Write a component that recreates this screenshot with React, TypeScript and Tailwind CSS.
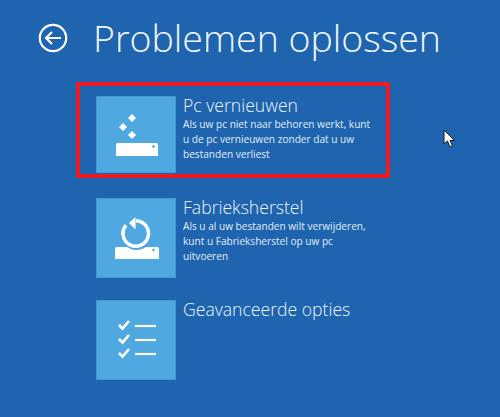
import type { ReactNode } from "react";

const font = { fontFamily: '"Open Sans", "Noto Sans", sans-serif' };

function RefreshIcon() {
  return (
    <svg width="80" height="77" viewBox="0 0 80 77">
      <path d="M36 18l4 4-4 4-4-4z" fill="#fff" />
      <path d="M27 27l4 4-4 4-4-4z" fill="#fff" />
      <path d="M36 35l4 4-4 4-4-4z" fill="#fff" />
      <path d="M20 49q0-2 2-2h38q2 0 2 2v11H20z" fill="#fff" />
      <path d="M56 50.500h3M57.500 49v3" stroke="#4fa8e0" strokeWidth="1" fill="none" />
    </svg>
  );
}

function ResetIcon() {
  return (
    <svg width="80" height="80" viewBox="0 0 80 80">
      <path d="M21 49h40q2 0 2 2v10H19V51q0-2 2-2z" fill="#fff" />
      <circle cx="40.500" cy="35.500" r="16.500" fill="#4fa8e0" />
      <path d="M40 22.750a12.750 12.750 0 1 1-10 4.500" fill="none" stroke="#fff" strokeWidth="3.500" />
      <path d="M33 25l6.500-6v12.500z" fill="#fff" />
      <path d="M56 52h3M57.500 50.500v3" stroke="#4fa8e0" strokeWidth="1" fill="none" />
    </svg>
  );
}

function OptionsIcon() {
  const rows = [26, 40, 54];
  return (
    <svg width="80" height="80" viewBox="0 0 80 80">
      {rows.map((y) => (
        <g key={y}>
          <path d={`M23 ${y - 1}l3.500 3.500 6.500-7.500`} fill="none" stroke="#fff" strokeWidth="2.600" />
          <path d={`M39 ${y}h21`} fill="none" stroke="#fff" strokeWidth="2.200" />
        </g>
      ))}
    </svg>
  );
}

function Option({ title, text, tileClass, children }: { title: string; text: string[]; tileClass: string; children: ReactNode }) {
  return (
    <div className="flex">
      <div className={`w-[80px] shrink-0 bg-[#4fa8e0] shadow-[inset_0_0_0_1px_#4598d6] ${tileClass}`}>{children}</div>
      <div className="ml-[7px] -mt-[2px]">
        <h2 className="text-[17.6px] leading-[22px] font-light text-[#eef5fb]">{title}</h2>
        <div className="mt-[1px] text-[10.1px] leading-[15px] text-[#e3eef8]">
          {text.map((line) => (
            <p key={line} className="whitespace-nowrap">{line}</p>
          ))}
        </div>
      </div>
    </div>
  );
}

export default function App() {
  return (
    <div className="relative h-[417px] w-[500px] overflow-hidden bg-[#1e64ae]" style={font}>
      <header className="flex h-[96px] items-start pl-[38px]">
        <svg className="mt-[23px]" width="30" height="30" viewBox="0 0 30 30" fill="none" stroke="#fff">
          <circle cx="15" cy="15" r="13.200" strokeWidth="2.200" />
          <path d="M23 15H8M14 9l-6 6 6 6" strokeWidth="2.200" />
        </svg>
        <h1 className="ml-[25px] mt-[13px] whitespace-nowrap text-[37.5px] leading-[50px] font-light text-[#f2f7fc]">Problemen oplossen</h1>
      </header>

      <main className="flex flex-col pl-[96px]">
        <Option
          title="Pc vernieuwen"
          text={["Als uw pc niet naar behoren werkt, kunt", "u de pc vernieuwen zonder dat u uw", "bestanden verliest"]}
          tileClass="h-[77px]"
        >
          <RefreshIcon />
        </Option>
        <div className="mt-[25px]">
          <Option
            title="Fabrieksherstel"
            text={["Als u al uw bestanden wilt verwijderen,", "kunt u Fabrieksherstel op uw pc", "uitvoeren"]}
            tileClass="h-[80px]"
          >
            <ResetIcon />
          </Option>
        </div>
        <div className="mt-[22px]">
          <Option title="Geavanceerde opties" text={[]} tileClass="h-[80px]">
            <OptionsIcon />
          </Option>
        </div>
      </main>

      {/* annotation drawn over the first option */}
      <div className="absolute left-[76px] top-[82px] h-[96px] w-[314px] border-4 border-[#ed1c24]" />

      <svg className="absolute left-[443px] top-[129px]" width="13" height="19" viewBox="0 0 13 19">
        <path d="M1 1v14l3.500-3 2.500 6 2.500-1-2.500-5.500H11.500z" fill="#fff" stroke="#1a1a1a" strokeWidth="1" />
      </svg>
    </div>
  );
}
